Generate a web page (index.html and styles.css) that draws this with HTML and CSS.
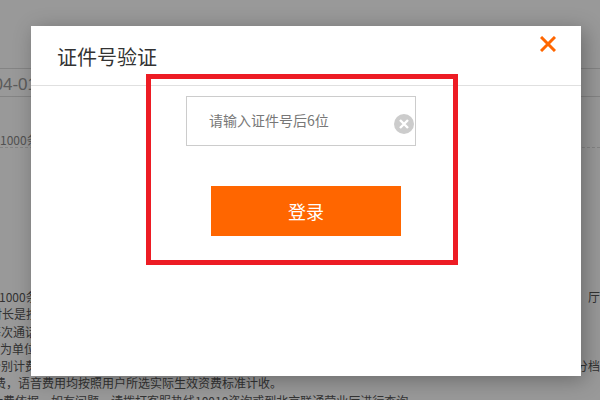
FILE: index.html
```html
<!DOCTYPE html>
<html lang="zh-CN">
<head>
<meta charset="utf-8">
<title>证件号验证</title>
<link rel="stylesheet" href="styles.css">
</head>
<body>
<main class="page">
  <div class="date-row"><span class="date">04-01</span></div>
  <p class="note">1000条</p>
  <div class="rules">
    <p class="rule rule-first"><span>1000条</span><span>厅</span></p>
    <p class="rule rule-second">时长是按</p>
    <p class="rule rule-third">每次通话</p>
    <p class="rule rule-fourth">分为单位</p>
    <p class="rule rule-fifth"><span>分别计费</span><span>分档</span></p>
    <p class="rule rule-sixth">费，语音费用均按照用户所选实际生效资费标准计收。</p>
    <p class="rule rule-seventh">计费依据，如有问题，请拨打客服热线10010咨询或到北京联通营业厅进行查询。</p>
  </div>
</main>
<div class="overlay">
  <section class="modal">
    <header class="modal-head">
      <h1 class="modal-title">证件号验证</h1>
      <svg class="close" viewBox="0 0 16 16" aria-label="关闭"><path d="M1 1 15 15M15 1 1 15"/></svg>
    </header>
    <div class="modal-body">
      <div class="field">
        <span class="placeholder">请输入证件号后6位</span>
        <svg class="clear" viewBox="0 0 20 20" aria-label="清除"><circle cx="10" cy="10" r="10"/><path d="M6 6 14 14M14 6 6 14"/></svg>
      </div>
      <button class="login" type="button">登录</button>
    </div>
    <div class="annotation"></div>
  </section>
</div>
</body>
</html>
```

FILE: styles.css
```css
* { box-sizing: border-box; }
html, body { margin: 0; height: 100%; overflow: hidden; }
body {
  position: relative;
  width: 600px;
  height: 400px;
  background: #fff;
  color: #555;
  font-family: "Noto Sans CJK SC", "Liberation Sans", sans-serif;
}
.page { width: 600px; padding-top: 68px; }
.date-row {
  height: 29px;
  line-height: 27px;
  font-size: 17px;
  color: #999;
  border-top: 1px solid #ddd;
  border-bottom: 1px solid #ddd;
}
.date { margin-left: -6.5px; font-family: "Liberation Sans", sans-serif; }
.note {
  margin: 0;
  height: 51px;
  padding-top: 34px;
  font-size: 12px;
  line-height: 17px;
  color: #888;
  border-bottom: 1px dashed #ddd;
}
.rules { margin-top: 140px; font-size: 12px; }
.rule { margin: 0; line-height: 17.3px; height: 17.3px; white-space: nowrap; }
.rule-first, .rule-fifth { display: flex; justify-content: space-between; }
.rule-first { margin-left: -1px; }
.rule-second { margin-left: -10px; }
.rule-third { margin-left: -11px; }
.rule-fourth { margin-left: -12px; }
.rule-fifth { margin-left: -11px; }
.rule-sixth { margin-left: -6px; }
.rule-seventh { margin-left: -9px; }
.overlay { position: absolute; inset: 0; background: rgba(0, 0, 0, .4); }
.modal {
  position: absolute;
  left: 31px;
  top: 26px;
  width: 550px;
  height: 350px;
  background: #fff;
  box-shadow: 4px 4px 20px rgba(0, 0, 0, .3);
}
.modal-head {
  display: flex;
  justify-content: space-between;
  align-items: flex-start;
  height: 60px;
  border-bottom: 1px solid #e0e0e0;
  padding: 18px 25px 0 26px;
}
.modal-title { margin: 0; font-size: 20px; line-height: 26px; font-weight: 400; color: #333; }
.close { width: 16px; height: 16px; margin-top: -8px; fill: none; stroke: #f60; stroke-width: 3; }
.modal-body {
  display: flex;
  flex-direction: column;
  align-items: center;
  padding-top: 10px;
}
.field {
  position: relative;
  display: flex;
  align-items: center;
  width: 230px;
  height: 50px;
  margin-right: 10px;
  padding-left: 22px;
  border: 1px solid #ccc;
}
.placeholder { font-size: 14px; line-height: 18px; color: #777; margin-top: -3px; }
.clear { position: absolute; right: 1px; top: 17px; width: 20px; height: 20px; }
.clear circle { fill: #ccc; }
.clear path { fill: none; stroke: #fff; stroke-width: 2.4; }
.login {
  margin-top: 40px;
  width: 190px;
  height: 50px;
  border: 0;
  padding: 0;
  background: #f60;
  color: #fff;
  font-family: inherit;
  font-size: 18px;
}
.annotation {
  position: absolute;
  left: 115px;
  top: 48px;
  width: 312px;
  height: 191px;
  border: 5px solid #ed1c24;
}
```
